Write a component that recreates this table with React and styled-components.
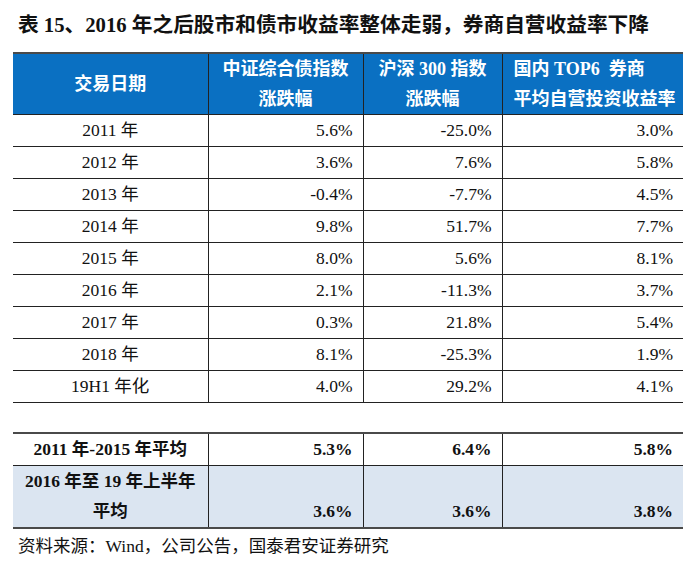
import React from "react";
import styled, { createGlobalStyle } from "styled-components";

const GlobalStyle = createGlobalStyle`
  body {
    margin: 0;
    background: #ffffff;
  }
`;

const Page = styled.div`
  width: 670px;
  padding-left: 13px;
  font-family: "Liberation Serif", "Noto Sans CJK SC", serif;
  color: #111;
`;

const Title = styled.h1`
  margin: 0;
  height: 52px;
  line-height: 50px;
  padding-left: 5px;
  font-size: 20.7px;
  font-weight: 700;
  color: #111;
  white-space: nowrap;
`;

const DataTable = styled.table`
  width: 670px;
  border-collapse: collapse;
  table-layout: fixed;
`;

const HeadCell = styled.th`
  padding: ${({ $align }) => ($align === "left" ? "0 0 0 11px" : "0")};
  background: #0a70c2;
  color: #ffffff;
  font-size: 18px;
  font-weight: 700;
  line-height: 30px;
  text-align: ${({ $align }) => $align || "center"};
  white-space: pre;
  border-top: 2px solid #4a4a4a;
  border-bottom: 1px solid #222;
  border-left: 1px solid #222;
  border-right: 1px solid #222;

  &:first-child {
    border-left: none;
  }
  &:last-child {
    border-right: none;
  }
`;

const Row = styled.tr`
  height: ${({ $h }) => $h}px;
  background: ${({ $shade }) => ($shade ? "#dbe5f1" : "transparent")};
`;

const Cell = styled.td`
  height: ${({ $h }) => $h}px;
  padding: ${({ $center }) => ($center ? "0" : "0 10px 0 0")};
  font-size: 17.5px;
  line-height: 30.5px;
  font-weight: ${({ $bold }) => ($bold ? 700 : 400)};
  text-align: ${({ $center }) => ($center ? "center" : "right")};
  vertical-align: ${({ $bottom }) => ($bottom ? "bottom" : "middle")};
  white-space: nowrap;
  border-top: ${({ $topRule }) => ($topRule ? "2px solid #4a4a4a" : "none")};
  border-bottom: ${({ $bottomRule }) => $bottomRule || "1px solid #222"};
  border-left: 1px solid #222;
  border-right: 1px solid #222;

  &:first-child {
    border-left: none;
  }
  &:last-child {
    border-right: none;
  }
`;

const Spacer = styled.td`
  height: 29px;
  padding: 0;
  border: none;
`;

const Footnote = styled.p`
  margin: 0;
  padding-left: 5px;
  font-size: 17.5px;
  line-height: 34px;
  color: #111;
`;

const rows = [
  ["2011 年", "5.6%", "-25.0%", "3.0%"],
  ["2012 年", "3.6%", "7.6%", "5.8%"],
  ["2013 年", "-0.4%", "-7.7%", "4.5%"],
  ["2014 年", "9.8%", "51.7%", "7.7%"],
  ["2015 年", "8.0%", "5.6%", "8.1%"],
  ["2016 年", "2.1%", "-11.3%", "3.7%"],
  ["2017 年", "0.3%", "21.8%", "5.4%"],
  ["2018 年", "8.1%", "-25.3%", "1.9%"],
  ["19H1 年化", "4.0%", "29.2%", "4.1%"],
];

const finalRule = "2px solid #4a4a4a";

const App = () => {
  return (
    <Page>
      <GlobalStyle />
      <Title>表 15、2016 年之后股市和债市收益率整体走弱，券商自营收益率下降</Title>

      <DataTable>
        <colgroup>
          <col style={{ width: 195 }} />
          <col style={{ width: 155 }} />
          <col style={{ width: 139 }} />
          <col style={{ width: 181 }} />
        </colgroup>
        <thead>
          <tr>
            <HeadCell>交易日期</HeadCell>
            <HeadCell>{"中证综合债指数\n涨跌幅"}</HeadCell>
            <HeadCell>{"沪深 300 指数\n涨跌幅"}</HeadCell>
            <HeadCell $align="left">{"国内 TOP6  券商\n平均自营投资收益率"}</HeadCell>
          </tr>
        </thead>
        <tbody>
          {rows.map((r) => (
            <Row key={r[0]} $h={32}>
              <Cell $center $h={31}>{r[0]}</Cell>
              <Cell $h={31}>{r[1]}</Cell>
              <Cell $h={31}>{r[2]}</Cell>
              <Cell $h={31}>{r[3]}</Cell>
            </Row>
          ))}
          <tr>
            <Spacer colSpan={4} />
          </tr>
          <Row $h={32}>
            <Cell $center $bold $topRule $h={29}>2011 年-2015 年平均</Cell>
            <Cell $bold $topRule $h={29}>5.3%</Cell>
            <Cell $bold $topRule $h={29}>6.4%</Cell>
            <Cell $bold $topRule $h={29}>5.8%</Cell>
          </Row>
          <Row $h={62} $shade>
            <Cell $center $bold $h={61} $bottomRule={finalRule}>
              2016 年至 19 年上半年
              <br />
              平均
            </Cell>
            <Cell $bold $bottom $h={61} $bottomRule={finalRule}>3.6%</Cell>
            <Cell $bold $bottom $h={61} $bottomRule={finalRule}>3.6%</Cell>
            <Cell $bold $bottom $h={61} $bottomRule={finalRule}>3.8%</Cell>
          </Row>
        </tbody>
      </DataTable>

      <Footnote>资料来源：Wind，公司公告，国泰君安证券研究</Footnote>
    </Page>
  );
};

export default App;
